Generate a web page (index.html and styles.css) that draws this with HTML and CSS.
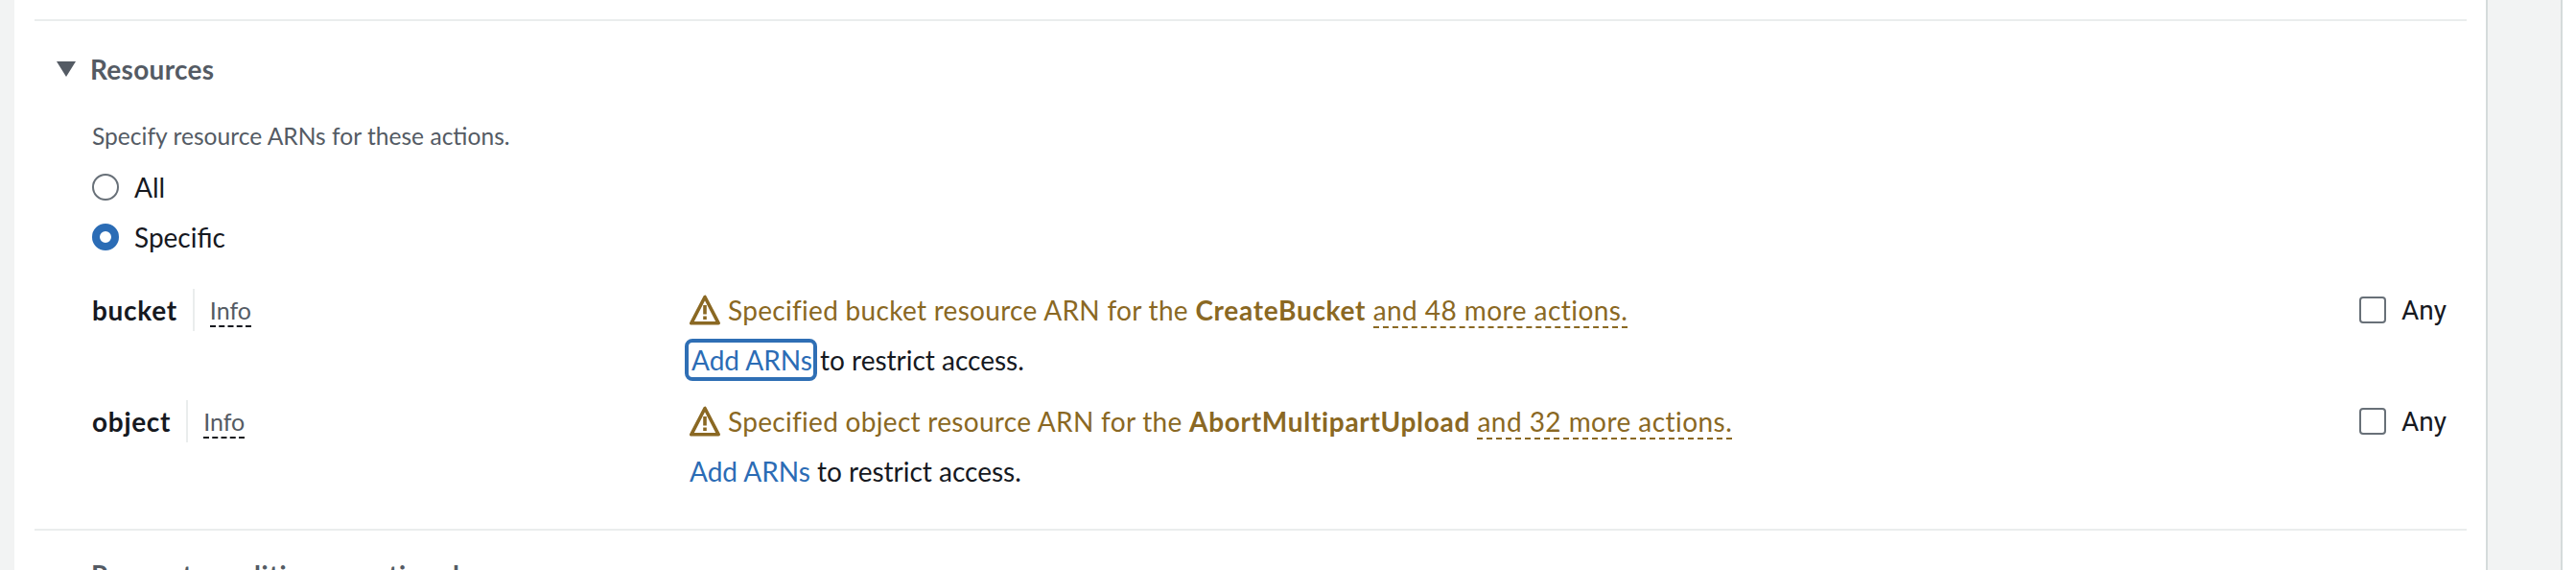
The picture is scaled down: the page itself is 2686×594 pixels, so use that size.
FILE: index.html
```html
<!DOCTYPE html>
<html lang="en">
<head>
  <meta charset="UTF-8">
  <title>Resources</title>
  <link rel="stylesheet" href="styles.css">
</head>
<body>
  <div class="page">
    <main class="panel">
      <section class="section">
        <div class="section-head">
          <svg class="caret" width="22" height="18" viewBox="0 0 22 18"><path d="M1 1h20L11 17z" fill="#545b64"/></svg>
          <h2>Resources</h2>
        </div>
        <div class="section-body">
          <p class="hint">Specify resource ARNs for these actions.</p>
          <div class="radios">
            <label class="radio"><span class="radio-dot"></span>All</label>
            <label class="radio"><span class="radio-dot checked"></span>Specific</label>
          </div>
          <div class="res-row">
            <div class="res-name"><strong>bucket</strong><span class="info">Info</span></div>
            <div class="res-msg">
              <div class="warn">
                <svg class="warn-icon" width="32" height="32" viewBox="0 0 32 32"><path d="M16 2.500 1.800 29.800h28.400z" fill="none" stroke="#8a6823" stroke-width="3.600" stroke-linejoin="round"/><path d="M14.200 11h3.600v9.500h-3.600zM14.200 22.500h3.600v3.600h-3.600z" fill="#8a6823"/></svg>
                <p>Specified bucket resource ARN for the <b>CreateBucket</b> <span class="more">and 48 more actions.</span></p>
              </div>
              <p class="add"><a class="focused">Add ARNs</a> to restrict access.</p>
            </div>
            <label class="any"><span class="box"></span>Any</label>
          </div>
          <div class="res-row">
            <div class="res-name"><strong>object</strong><span class="info">Info</span></div>
            <div class="res-msg">
              <div class="warn">
                <svg class="warn-icon" width="32" height="32" viewBox="0 0 32 32"><path d="M16 2.500 1.800 29.800h28.400z" fill="none" stroke="#8a6823" stroke-width="3.600" stroke-linejoin="round"/><path d="M14.200 11h3.600v9.500h-3.600zM14.200 22.500h3.600v3.600h-3.600z" fill="#8a6823"/></svg>
                <p>Specified object resource ARN for the <b>AbortMultipartUpload</b> <span class="more">and 32 more actions.</span></p>
              </div>
              <p class="add"><a>Add ARNs</a> to restrict access.</p>
            </div>
            <label class="any"><span class="box"></span>Any</label>
          </div>
        </div>
      </section>
      <h2 class="next">Request conditions - optional</h2>
    </main>
    <div class="rail"></div>
  </div>
</body>
</html>
```

FILE: styles.css
```css
* {
  box-sizing: border-box;
}

html, body {
  margin: 0;
  height: 594px;
  overflow: hidden;
  background: #fff;
}

body {
  font-family: Lato, sans-serif;
  font-size: 28px;
  color: #16191f;
}

p, h2 {
  margin: 0;
}

.page {
  display: flex;
  height: 594px;
}

.panel {
  width: 2594px;
  height: 594px;
  padding: 20px 20px 0 21px;
  background: #fff;
  border-left: 15px solid #f2f3f3;
  border-right: 2px solid #d5dbdb;
  overflow: hidden;
}

.rail {
  width: 78px;
  background: #f2f3f3;
  border-right: 2px solid #d5dbdb;
}

.section {
  height: 533px;
  padding: 0 0 0 22px;
  border-top: 2px solid #eaeded;
  border-bottom: 2px solid #eaeded;
}

.section-head {
  display: flex;
  align-items: center;
  gap: 14px;
  height: 40px;
  margin-top: 30px;
}

h2 {
  font-size: 28px;
  font-weight: 700;
  letter-spacing: 0.3px;
  color: #545b64;
}

.section-body {
  padding-left: 38px;
}

.hint {
  margin-top: 33px;
  font-size: 24.6px;
  line-height: 34px;
  color: #545b64;
}

.radios {
  display: flex;
  flex-direction: column;
  gap: 12px;
  margin-top: 16px;
}

.radio {
  display: flex;
  align-items: center;
  gap: 16px;
  height: 40px;
}

.radio-dot {
  width: 28px;
  height: 28px;
  border: 2px solid #687078;
  border-radius: 50%;
}

.radio-dot.checked {
  border: 8px solid #2b6cb5;
}

.res-row {
  display: flex;
  height: 116px;
}

.radios + .res-row {
  margin-top: 34px;
}

.res-name {
  display: flex;
  align-items: center;
  align-self: flex-start;
  width: 623px;
  height: 44px;
}

.res-name strong {
  padding-right: 16px;
  border-right: 2px solid #eaeded;
  letter-spacing: 0.7px;
  line-height: 44px;
}

.info {
  margin: 2px 0 0 16px;
  font-size: 25px;
  line-height: 32px;
  color: #545b64;
  border-bottom: 2px dashed #16191f;
}

.res-msg {
  flex: 1;
}

.warn {
  display: flex;
  align-items: center;
  gap: 8px;
  height: 44px;
  letter-spacing: 0.3px;
  color: #8a6823;
}

.warn b {
  letter-spacing: 0.7px;
}

.more {
  letter-spacing: 0.45px;
  border-bottom: 2px dashed #8a6823;
}

.add {
  margin-top: 8px;
  line-height: 44px;
}

.add a {
  color: #2b6cb5;
}

.add a.focused {
  margin: -5px -4px -5px -5px;
  padding: 1px 1px 1px 3px;
  border: 4px solid #2f6fb5;
  border-radius: 8px;
}

.any {
  display: flex;
  align-items: center;
  align-self: flex-start;
  gap: 16px;
  width: 112px;
  height: 44px;
  font-family: Roboto, sans-serif;
}

.box {
  width: 28px;
  height: 28px;
  border: 2px solid #687078;
  border-radius: 4px;
}

.next {
  margin: 29px 0 0 59px;
  letter-spacing: 0.7px;
}
```
